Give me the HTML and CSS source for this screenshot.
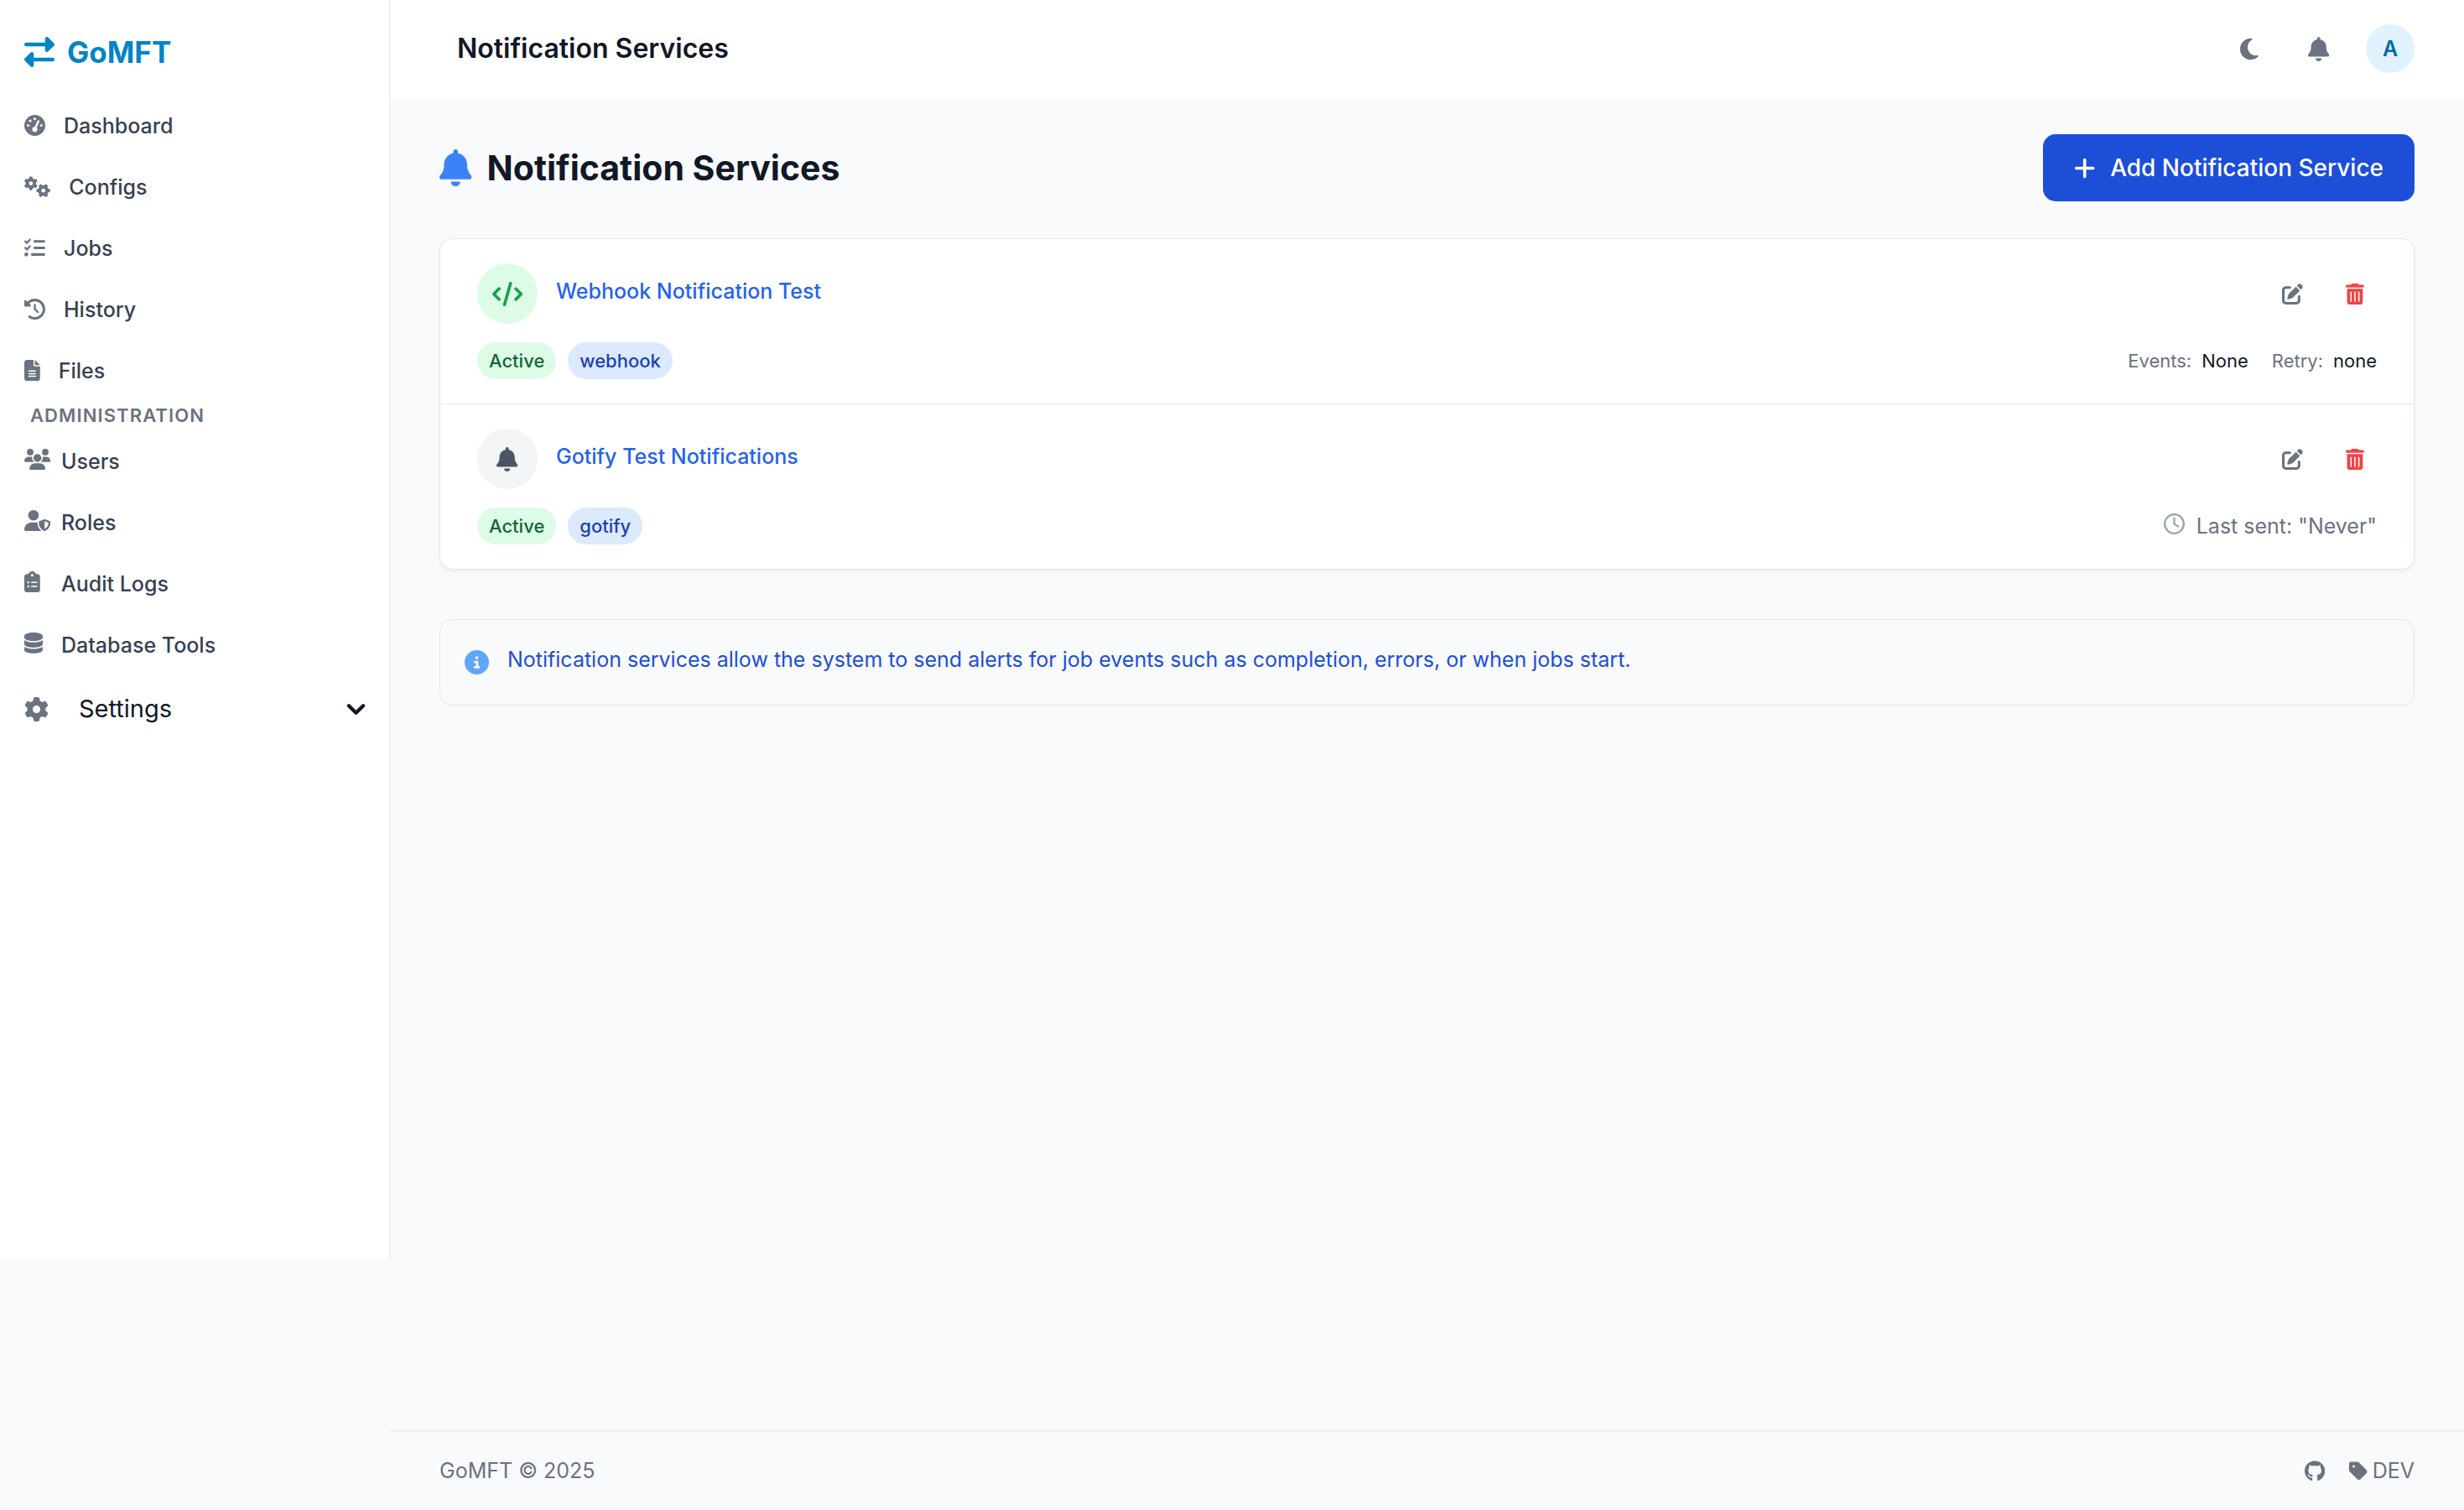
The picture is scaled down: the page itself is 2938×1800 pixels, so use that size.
FILE: index.html
```html
<!DOCTYPE html>
<html lang="en">
<head>
<meta charset="utf-8">
<meta name="viewport" content="width=device-width, initial-scale=1">
<title>Notification Services - GoMFT</title>
<link rel="stylesheet" href="styles.css">
</head>
<body>
<svg class="sprite" aria-hidden="true">
  <symbol id="bell" viewBox="0 0 448 512"><path d="M224 0c-17.7 0-32 14.3-32 32V51.2C119 66 64 130.6 64 208v18.8c0 47-17.3 92.4-48.5 127.6l-7.4 8.3c-8.4 9.4-10.4 22.9-5.3 34.4S19.4 416 32 416H416c12.6 0 24-7.4 29.2-18.9s3.1-25-5.3-34.4l-7.4-8.3C401.3 319.2 384 273.9 384 226.8V208c0-77.4-55-142-128-156.8V32c0-17.7-14.3-32-32-32zm45.3 493.3c12-12 18.7-28.3 18.7-45.3H224 160c0 17 6.7 33.3 18.7 45.3s28.3 18.7 45.3 18.7s33.3-6.7 45.3-18.7z"/></symbol>
  <symbol id="edit" viewBox="0 0 512 512"><path d="M471.6 21.7c-21.9-21.9-57.3-21.9-79.2 0L362.3 51.7l97.9 97.9 30.1-30.1c21.9-21.9 21.9-57.3 0-79.2L471.6 21.7zm-299.2 220c-6.1 6.1-10.8 13.6-13.5 21.9l-29.6 88.8c-2.9 8.6-.6 18.1 5.8 24.6s15.9 8.7 24.6 5.8l88.8-29.6c8.2-2.7 15.7-7.4 21.9-13.5L437.7 172.3 339.7 74.3 172.4 241.7zM96 64C43 64 0 107 0 160V416c0 53 43 96 96 96H352c53 0 96-43 96-96V320c0-17.7-14.3-32-32-32s-32 14.3-32 32v96c0 17.7-14.3 32-32 32H96c-17.7 0-32-14.3-32-32V160c0-17.7 14.3-32 32-32h96c17.7 0 32-14.3 32-32s-14.3-32-32-32H96z"/></symbol>
  <symbol id="trash" viewBox="0 0 448 512"><path d="M135.2 17.7L128 32H32C14.3 32 0 46.3 0 64S14.3 96 32 96H416c17.7 0 32-14.3 32-32s-14.3-32-32-32H320l-7.2-14.3C307.4 6.8 296.3 0 284.2 0H163.8c-12.1 0-23.2 6.8-28.6 17.7zM32 128V448c0 35.3 28.7 64 64 64H352c35.3 0 64-28.7 64-64V128H32zm96 64c8.8 0 16 7.2 16 16V432c0 8.8-7.2 16-16 16s-16-7.2-16-16V208c0-8.8 7.2-16 16-16zm96 0c8.8 0 16 7.2 16 16V432c0 8.8-7.2 16-16 16s-16-7.2-16-16V208c0-8.8 7.2-16 16-16zm96 0c8.8 0 16 7.2 16 16V432c0 8.8-7.2 16-16 16s-16-7.2-16-16V208c0-8.8 7.2-16 16-16z"/></symbol>
</svg>

<div class="layout">
  <aside class="sidebar">
    <a class="brand" href="#">
      <svg class="brand-icon" viewBox="0 0 512 512" aria-hidden="true"><path d="M32 96l320 0V32c0-12.9 7.8-24.6 19.8-29.6s25.7-2.2 34.9 6.9l96 96c6 6 9.4 14.1 9.4 22.6s-3.4 16.6-9.4 22.6l-96 96c-9.2 9.2-22.9 11.9-34.9 6.9s-19.8-16.6-19.8-29.6V160L32 160c-17.7 0-32-14.3-32-32s14.3-32 32-32zM480 352c17.7 0 32 14.3 32 32s-14.3 32-32 32H160v64c0 12.9-7.8 24.6-19.8 29.6s-25.7 2.2-34.9-6.9l-96-96c-6-6-9.4-14.1-9.4-22.6s3.4-16.6 9.4-22.6l96-96c9.2-9.2 22.9-11.9 34.9-6.9s19.8 16.6 19.8 29.6l0 64H480z"/></svg>
      GoMFT
    </a>
    <nav aria-label="Main">
      <ul class="nav">
        <li><a class="nav-link" href="#"><svg class="icon" viewBox="0 0 512 512" aria-hidden="true"><path d="M0 256a256 256 0 1 1 512 0A256 256 0 1 1 0 256zM288 96a32 32 0 1 0 -64 0 32 32 0 1 0 64 0zM256 416c35.3 0 64-28.7 64-64c0-17.4-6.9-33.1-18.1-44.6L366 161.7c5.3-12.1-.2-26.3-12.3-31.6s-26.3 .2-31.6 12.3L257.9 288c-.6 0-1.3 0-1.9 0c-35.3 0-64 28.7-64 64s28.7 64 64 64zM176 144a32 32 0 1 0 -64 0 32 32 0 1 0 64 0zM96 288a32 32 0 1 0 0-64 32 32 0 1 0 0 64zm352-32a32 32 0 1 0 -64 0 32 32 0 1 0 64 0z"/></svg>Dashboard</a></li>
        <li><a class="nav-link" href="#"><svg class="icon" viewBox="0 0 640 512" aria-hidden="true"><path d="M308.5 135.3c7.1-6.3 9.9-16.2 6.2-25c-2.3-5.3-4.8-10.5-7.6-15.5L304 89.4c-3-5-6.3-9.9-9.8-14.6c-5.7-7.6-15.7-10.1-24.7-7.1l-28.2 9.3c-10.7-8.8-23-16-36.2-20.9L199 27.1c-1.9-9.3-9.1-16.7-18.5-17.8C173.9 8.4 167.2 8 160.4 8h-.7c-6.8 0-13.5 .4-20.1 1.2c-9.4 1.1-16.6 8.6-18.5 17.8L115 56.1c-13.3 5-25.5 12.1-36.2 20.9L50.5 67.8c-9-3-19-.5-24.7 7.1c-3.5 4.7-6.8 9.6-9.9 14.6l-3 5.3c-2.8 5-5.3 10.2-7.6 15.6c-3.7 8.7-.9 18.6 6.2 25l22.2 19.8C32.6 161.9 32 168.9 32 176s.6 14.1 1.7 20.9L11.5 216.7c-7.1 6.3-9.9 16.2-6.2 25c2.3 5.3 4.8 10.5 7.6 15.6l3 5.2c3 5.1 6.3 9.9 9.9 14.6c5.7 7.6 15.7 10.1 24.7 7.1l28.2-9.3c10.7 8.8 23 16 36.2 20.9l6.1 29.1c1.9 9.3 9.1 16.7 18.5 17.8c6.7 .8 13.5 1.2 20.4 1.2s13.7-.4 20.4-1.2c9.4-1.1 16.6-8.6 18.5-17.8l6.1-29.1c13.3-5 25.5-12.1 36.2-20.9l28.2 9.3c9 3 19 .5 24.7-7.1c3.5-4.7 6.8-9.5 9.8-14.6l3.1-5.4c2.8-5 5.3-10.2 7.6-15.5c3.7-8.7 .9-18.6-6.2-25l-22.2-19.8c1.1-6.8 1.7-13.8 1.7-20.9s-.6-14.1-1.7-20.9l22.2-19.8zM112 176a48 48 0 1 1 96 0 48 48 0 1 1 -96 0zM504.7 500.5c6.3 7.1 16.2 9.9 25 6.2c5.3-2.3 10.5-4.8 15.5-7.6l5.4-3.1c5-3 9.9-6.3 14.6-9.8c7.6-5.7 10.1-15.7 7.1-24.7l-9.3-28.2c8.8-10.7 16-23 20.9-36.2l29.1-6.1c9.3-1.9 16.7-9.1 17.8-18.5c.8-6.7 1.2-13.5 1.2-20.4s-.4-13.7-1.2-20.4c-1.1-9.4-8.6-16.6-17.8-18.5L583.9 307c-5-13.3-12.1-25.5-20.9-36.2l9.3-28.2c3-9 .5-19-7.1-24.7c-4.7-3.5-9.6-6.8-14.6-9.9l-5.3-3c-5-2.8-10.2-5.3-15.6-7.6c-8.7-3.7-18.6-.9-25 6.2l-19.8 22.2c-6.8-1.1-13.8-1.7-20.9-1.7s-14.1 .6-20.9 1.7l-19.8-22.2c-6.3-7.1-16.2-9.9-25-6.2c-5.3 2.3-10.5 4.8-15.6 7.6l-5.2 3c-5.1 3-9.9 6.3-14.6 9.9c-7.6 5.7-10.1 15.7-7.1 24.7l9.3 28.2c-8.8 10.7-16 23-20.9 36.2L315.1 313c-9.3 1.9-16.7 9.1-17.8 18.5c-.8 6.7-1.2 13.5-1.2 20.4s.4 13.7 1.2 20.4c1.1 9.4 8.6 16.6 17.8 18.5l29.1 6.1c5 13.3 12.1 25.5 20.9 36.2l-9.3 28.2c-3 9-.5 19 7.1 24.7c4.7 3.5 9.5 6.8 14.6 9.8l5.4 3.1c5 2.8 10.2 5.3 15.5 7.6c8.7 3.7 18.6 .9 25-6.2l19.8-22.2c6.8 1.1 13.8 1.7 20.9 1.7s14.1-.6 20.9-1.7l19.8 22.2zM464 304a48 48 0 1 1 0 96 48 48 0 1 1 0-96z"/></svg>Configs</a></li>
        <li><a class="nav-link" href="#"><svg class="icon" viewBox="0 0 512 512" aria-hidden="true"><path d="M152.1 38.2c9.9 8.9 10.7 24 1.8 33.9l-72 80c-4.4 4.9-10.6 7.8-17.2 7.9s-12.9-2.4-17.6-7L7 113C-2.3 103.6-2.3 88.4 7 79s24.6-9.4 33.9 0l22.1 22.1 55.1-61.2c8.9-9.9 24-10.7 33.9-1.8zm0 160c9.9 8.9 10.7 24 1.8 33.9l-72 80c-4.4 4.9-10.6 7.8-17.2 7.9s-12.9-2.4-17.6-7L7 273c-9.4-9.4-9.4-24.6 0-33.9s24.6-9.4 33.9 0l22.1 22.1 55.1-61.2c8.9-9.9 24-10.7 33.9-1.8zM224 96c0-17.7 14.3-32 32-32H480c17.7 0 32 14.3 32 32s-14.3 32-32 32H256c-17.7 0-32-14.3-32-32zm0 160c0-17.7 14.3-32 32-32H480c17.7 0 32 14.3 32 32s-14.3 32-32 32H256c-17.7 0-32-14.3-32-32zM160 416c0-17.7 14.3-32 32-32H480c17.7 0 32 14.3 32 32s-14.3 32-32 32H192c-17.7 0-32-14.3-32-32zM48 368a48 48 0 1 1 0 96 48 48 0 1 1 0-96z"/></svg>Jobs</a></li>
        <li><a class="nav-link" href="#"><svg class="icon" viewBox="0 0 512 512" aria-hidden="true"><path d="M75 75L41 41C25.9 25.9 0 36.6 0 57.9V168c0 13.3 10.7 24 24 24H134.1c21.4 0 32.1-25.9 17-41l-30.8-30.8C155 85.5 203 64 256 64c106 0 192 86 192 192s-86 192-192 192c-40.8 0-78.6-12.7-109.7-34.4c-14.5-10.1-34.4-6.6-44.6 7.9s-6.6 34.4 7.9 44.6C151.2 495 201.7 512 256 512c141.4 0 256-114.6 256-256S397.4 0 256 0C185.3 0 121.3 28.7 75 75zm181 53c-13.3 0-24 10.7-24 24V256c0 6.4 2.5 12.5 7 17l72 72c9.4 9.4 24.6 9.4 33.9 0s9.4-24.6 0-33.9l-65-65V152c0-13.3-10.7-24-24-24z"/></svg>History</a></li>
        <li><a class="nav-link" href="#"><svg class="icon" viewBox="0 0 384 512" aria-hidden="true"><path d="M64 0C28.7 0 0 28.7 0 64V448c0 35.3 28.7 64 64 64H320c35.3 0 64-28.7 64-64V160H256c-17.7 0-32-14.3-32-32V0H64zM256 0V128H384L256 0zM112 256H272c8.8 0 16 7.2 16 16s-7.2 16-16 16H112c-8.8 0-16-7.2-16-16s7.2-16 16-16zm0 64H272c8.8 0 16 7.2 16 16s-7.2 16-16 16H112c-8.8 0-16-7.2-16-16s7.2-16 16-16zm0 64H272c8.8 0 16 7.2 16 16s-7.2 16-16 16H112c-8.8 0-16-7.2-16-16s7.2-16 16-16z"/></svg>Files</a></li>
      </ul>
      <h2 class="nav-heading">Administration</h2>
      <ul class="nav">
        <li><a class="nav-link admin" href="#"><span class="slot"><svg class="icon" viewBox="0 0 640 512" aria-hidden="true"><path d="M144 0a80 80 0 1 1 0 160A80 80 0 1 1 144 0zM512 0a80 80 0 1 1 0 160A80 80 0 1 1 512 0zM0 298.7C0 239.8 47.8 192 106.7 192h42.7c15.9 0 31 3.5 44.6 9.7c-1.3 7.2-1.9 14.7-1.9 22.3c0 38.2 16.8 72.5 43.3 96c-.2 0-.4 0-.7 0H21.3C9.6 320 0 310.4 0 298.7zM405.3 320c-.2 0-.4 0-.7 0c26.6-23.5 43.3-57.8 43.3-96c0-7.6-.7-15-1.9-22.3c13.6-6.3 28.7-9.7 44.6-9.7h42.7C592.2 192 640 239.8 640 298.7c0 11.8-9.6 21.3-21.3 21.3H405.3zM224 224a96 96 0 1 1 192 0 96 96 0 1 1 -192 0zM128 485.3C128 411.7 187.7 352 261.3 352H378.7C452.3 352 512 411.7 512 485.3c0 14.7-11.9 26.7-26.7 26.7H154.7c-14.7 0-26.7-11.9-26.7-26.7z"/></svg></span>Users</a></li>
        <li><a class="nav-link admin" href="#"><span class="slot"><svg class="icon" viewBox="0 0 640 512" aria-hidden="true"><path d="M224 256A128 128 0 1 0 224 0a128 128 0 1 0 0 256zm-45.7 48C79.8 304 0 383.8 0 482.3C0 498.7 13.3 512 29.7 512H418.3c1.8 0 3.5-.2 5.3-.5c-76.3-55.1-99.8-141-103.1-200.2c-16.1-4.8-33.1-7.3-50.7-7.3H178.3zm308.8-78.3l-120 48C358 277.4 352 286.2 352 296c0 63.3 25.9 168.8 134.8 214.2c5.9 2.5 12.6 2.5 18.5 0C614.1 464.8 640 359.3 640 296c0-9.8-6-18.6-15.1-22.3l-120-48c-5.7-2.3-12.1-2.3-17.8 0zM591.4 312c-3.9 50.7-27.2 116.7-95.4 149.7V273.8L591.4 312z"/></svg></span>Roles</a></li>
        <li><a class="nav-link admin" href="#"><span class="slot"><svg class="icon" viewBox="0 0 384 512" aria-hidden="true"><path d="M192 0c-41.8 0-77.4 26.7-90.5 64H64C28.7 64 0 92.7 0 128V448c0 35.3 28.7 64 64 64H320c35.3 0 64-28.7 64-64V128c0-35.3-28.7-64-64-64H282.5C269.4 26.7 233.8 0 192 0zm0 64a32 32 0 1 1 0 64 32 32 0 1 1 0-64zM72 272a24 24 0 1 1 48 0 24 24 0 1 1 -48 0zm104-16H304c8.8 0 16 7.2 16 16s-7.2 16-16 16H176c-8.8 0-16-7.2-16-16s7.2-16 16-16zM72 368a24 24 0 1 1 48 0 24 24 0 1 1 -48 0zm88 0c0-8.8 7.2-16 16-16H304c8.8 0 16 7.2 16 16s-7.2 16-16 16H176c-8.8 0-16-7.2-16-16z"/></svg></span>Audit Logs</a></li>
        <li><a class="nav-link admin" href="#"><span class="slot"><svg class="icon" viewBox="0 0 448 512" aria-hidden="true"><path d="M448 80v48c0 44.2-100.3 80-224 80S0 172.2 0 128V80C0 35.8 100.3 0 224 0S448 35.8 448 80zM393.2 214.7c20.8-7.4 39.9-16.9 54.8-28.6V288c0 44.2-100.3 80-224 80S0 332.2 0 288V186.1c14.9 11.8 34 21.2 54.8 28.6C99.7 230.7 159.5 240 224 240s124.3-9.3 169.2-25.3zM0 346.1c14.9 11.8 34 21.2 54.8 28.6C99.7 390.7 159.5 400 224 400s124.3-9.3 169.2-25.3c20.8-7.4 39.9-16.9 54.8-28.6V432c0 44.2-100.3 80-224 80S0 476.2 0 432V346.1z"/></svg></span>Database Tools</a></li>
      </ul>
      <button class="settings" type="button" aria-expanded="false">
        <svg class="icon-md" viewBox="0 0 512 512" aria-hidden="true"><path d="M495.9 166.6c3.2 8.7 .5 18.4-6.4 24.6l-43.3 39.4c1.1 8.3 1.7 16.8 1.7 25.4s-.6 17.1-1.7 25.4l43.3 39.4c6.9 6.2 9.6 15.9 6.4 24.6c-4.4 11.9-9.7 23.3-15.8 34.3l-4.7 8.1c-6.6 11-14 21.4-22.1 31.2c-5.9 7.2-15.7 9.6-24.5 6.8l-55.7-17.7c-13.4 10.3-28.2 18.9-44 25.4l-12.5 57.1c-2 9.1-9 16.3-18.2 17.8c-13.8 2.3-28 3.5-42.5 3.5s-28.7-1.2-42.5-3.5c-9.2-1.5-16.2-8.7-18.2-17.8l-12.5-57.1c-15.8-6.5-30.6-15.1-44-25.4L83.1 425.9c-8.8 2.8-18.6 .3-24.5-6.8c-8.1-9.8-15.5-20.2-22.1-31.2l-4.7-8.1c-6.1-11-11.4-22.4-15.8-34.3c-3.2-8.7-.5-18.4 6.4-24.6l43.3-39.4C64.6 273.1 64 264.6 64 256s.6-17.1 1.7-25.4L22.4 191.2c-6.9-6.2-9.6-15.9-6.4-24.6c4.4-11.9 9.7-23.3 15.8-34.3l4.7-8.1c6.6-11 14-21.4 22.1-31.2c5.9-7.2 15.7-9.6 24.5-6.8l55.7 17.7c13.4-10.3 28.2-18.9 44-25.4l12.5-57.1c2-9.1 9-16.3 18.2-17.8C227.3 1.2 241.5 0 256 0s28.7 1.2 42.5 3.5c9.2 1.5 16.2 8.7 18.2 17.8l12.5 57.1c15.8 6.5 30.6 15.1 44 25.4l55.7-17.7c8.8-2.8 18.6-.3 24.5 6.8c8.1 9.8 15.5 20.2 22.1 31.2l4.7 8.1c6.1 11 11.4 22.4 15.8 34.3zM256 336a80 80 0 1 0 0-160 80 80 0 1 0 0 160z"/></svg>
        <span class="settings-label">Settings</span>
        <svg class="chevron" viewBox="0 0 20 20" aria-hidden="true"><path d="M5.293 7.293a1 1 0 011.414 0L10 10.586l3.293-3.293a1 1 0 111.414 1.414l-4 4a1 1 0 01-1.414 0l-4-4a1 1 0 010-1.414z"/></svg>
      </button>
    </nav>
  </aside>

  <div class="page">
    <header class="topbar">
      <span class="topbar-title">Notification Services</span>
      <div class="topbar-actions">
        <button class="icon-button" type="button" aria-label="Toggle dark mode"><svg class="icon-md" viewBox="0 0 384 512" aria-hidden="true"><path d="M223.5 32C100 32 0 132.3 0 256S100 480 223.5 480c60.6 0 115.5-24.2 155.8-63.4c5-4.9 6.3-12.5 3.1-18.7s-10.1-9.7-17-8.5c-9.8 1.7-19.8 2.6-30.1 2.6c-96.9 0-175.5-78.8-175.5-176c0-65.8 36-123.1 89.3-153.3c6.1-3.5 9.2-10.5 7.7-17.3s-7.3-11.9-14.3-12.5c-6.3-.5-12.6-.8-19-.8z"/></svg></button>
        <button class="icon-button" type="button" aria-label="Notifications"><svg class="icon-md" viewBox="0 0 448 512" aria-hidden="true"><use href="#bell"/></svg></button>
        <button class="avatar" type="button" aria-label="Account">A</button>
      </div>
    </header>

    <main class="content">
      <div class="heading-row">
        <h1 class="heading"><svg class="heading-icon" viewBox="0 0 448 512" aria-hidden="true"><use href="#bell"/></svg>Notification Services</h1>
        <button class="primary" type="button"><svg class="icon-md" viewBox="0 0 448 512" aria-hidden="true"><path d="M256 80c0-17.7-14.3-32-32-32s-32 14.3-32 32V224H48c-17.7 0-32 14.3-32 32s14.3 32 32 32H192V432c0 17.7 14.3 32 32 32s32-14.3 32-32V288H400c17.7 0 32-14.3 32-32s-14.3-32-32-32H256V80z"/></svg>Add Notification Service</button>
      </div>

      <ul class="card">
        <li class="service">
          <div class="service-row">
            <span class="badge-icon green"><svg class="icon-md" viewBox="0 0 640 512" aria-hidden="true"><path d="M392.8 1.2c-17-4.9-34.7 5-39.6 22l-128 448c-4.9 17 5 34.7 22 39.6s34.7-5 39.6-22l128-448c4.9-17-5-34.7-22-39.6zm80.6 120.1c-12.5 12.5-12.5 32.8 0 45.3L562.7 256l-89.4 89.4c-12.5 12.5-12.5 32.8 0 45.3s32.8 12.5 45.3 0l112-112c12.5-12.5 12.5-32.8 0-45.3l-112-112c-12.5-12.5-32.8-12.5-45.3 0zm-306.7 0c-12.5-12.5-32.8-12.5-45.3 0l-112 112c-12.5 12.5-12.5 32.8 0 45.3l112 112c12.5 12.5 32.8 12.5 45.3 0s12.5-32.8 0-45.3L77.3 256l89.4-89.4c12.5-12.5 12.5-32.8 0-45.3z"/></svg></span>
            <a class="service-name" href="#">Webhook Notification Test</a>
            <button class="action" type="button" aria-label="Edit"><svg class="icon" viewBox="0 0 512 512" aria-hidden="true"><use href="#edit"/></svg></button>
            <button class="action danger" type="button" aria-label="Delete"><svg class="icon" viewBox="0 0 448 512" aria-hidden="true"><use href="#trash"/></svg></button>
          </div>
          <div class="service-row">
            <div class="pills"><span class="pill active">Active</span><span class="pill type">webhook</span></div>
            <dl class="facts">
              <div class="fact"><dt>Events:</dt><dd>None</dd></div>
              <div class="fact"><dt>Retry:</dt><dd>none</dd></div>
            </dl>
          </div>
        </li>
        <li class="service">
          <div class="service-row">
            <span class="badge-icon gray"><svg class="icon-md" viewBox="0 0 448 512" aria-hidden="true"><use href="#bell"/></svg></span>
            <a class="service-name" href="#">Gotify Test Notifications</a>
            <button class="action" type="button" aria-label="Edit"><svg class="icon" viewBox="0 0 512 512" aria-hidden="true"><use href="#edit"/></svg></button>
            <button class="action danger" type="button" aria-label="Delete"><svg class="icon" viewBox="0 0 448 512" aria-hidden="true"><use href="#trash"/></svg></button>
          </div>
          <div class="service-row">
            <div class="pills"><span class="pill active">Active</span><span class="pill type">gotify</span></div>
            <p class="last-sent"><span class="clock"><svg class="icon" viewBox="0 0 512 512" aria-hidden="true"><path d="M464 256A208 208 0 1 1 48 256a208 208 0 1 1 416 0zM0 256a256 256 0 1 0 512 0A256 256 0 1 0 0 256zM232 120V256c0 8 4 15.5 10.7 20l96 64c11 7.4 25.9 4.4 33.3-6.7s4.4-25.9-6.7-33.3L280 243.2V120c0-13.3-10.7-24-24-24s-24 10.7-24 24z"/></svg></span>Last sent: "Never"</p>
          </div>
        </li>
      </ul>

      <div class="info">
        <span class="info-icon"><svg class="icon-md" viewBox="0 0 512 512" aria-hidden="true"><path d="M256 512A256 256 0 1 0 256 0a256 256 0 1 0 0 512zM216 336h24V272H216c-13.3 0-24-10.7-24-24s10.7-24 24-24h48c13.3 0 24 10.7 24 24v88h8c13.3 0 24 10.7 24 24s-10.7 24-24 24H216c-13.3 0-24-10.7-24-24s10.7-24 24-24zm40-208a32 32 0 1 1 0 64 32 32 0 1 1 0-64z"/></svg></span>
        <p class="info-text">Notification services allow the system to send alerts for job events such as completion, errors, or when jobs start.</p>
      </div>
    </main>

    <footer class="footer">
      <span>GoMFT © 2025</span>
      <div class="footer-links">
        <a class="footer-link" href="#" aria-label="GitHub"><svg class="icon" viewBox="0 0 496 512" aria-hidden="true"><path d="M165.9 397.4c0 2-2.3 3.6-5.2 3.6-3.3.3-5.6-1.3-5.6-3.6 0-2 2.3-3.6 5.2-3.6 3-.3 5.6 1.3 5.6 3.6zm-31.1-4.5c-.7 2 1.3 4.3 4.3 4.9 2.6 1 5.6 0 6.2-2s-1.3-4.3-4.3-5.2c-2.6-.7-5.5.3-6.2 2.3zm44.2-1.7c-2.9.7-4.9 2.6-4.6 4.9.3 2 2.9 3.3 5.9 2.6 2.9-.7 4.9-2.6 4.6-4.6-.3-1.9-3-3.2-5.9-2.9zM244.8 8C106.1 8 0 113.3 0 252c0 110.9 69.8 205.8 169.5 239.2 12.8 2.3 17.3-5.6 17.3-12.1 0-6.2-.3-40.4-.3-61.4 0 0-70 15-84.7-29.8 0 0-11.4-29.1-27.8-36.6 0 0-22.9-15.7 1.6-15.4 0 0 24.9 2 38.6 25.8 21.9 38.6 58.6 27.5 72.9 20.9 2.3-16 8.8-27.1 16-33.7-55.9-6.2-112.3-14.3-112.3-110.5 0-27.5 7.6-41.3 23.6-58.9-2.6-6.5-11.1-33.3 2.6-67.9 20.9-6.5 69 27 69 27 20-5.6 41.5-8.5 62.8-8.5s42.8 2.9 62.8 8.5c0 0 48.1-33.6 69-27 13.7 34.7 5.2 61.4 2.6 67.9 16 17.7 25.8 31.5 25.8 58.9 0 96.5-58.9 104.2-114.8 110.5 9.2 7.9 17 22.9 17 46.4 0 33.7-.3 75.4-.3 83.6 0 6.5 4.6 14.4 17.3 12.1C428.2 457.8 496 362.9 496 252 496 113.3 383.5 8 244.8 8z"/></svg></a>
        <span class="version"><svg class="icon" viewBox="0 0 448 512" aria-hidden="true"><path d="M0 80V229.5c0 17 6.7 33.3 18.7 45.3l176 176c25 25 65.5 25 90.5 0L418.7 317.3c25-25 25-65.5 0-90.5l-176-176c-12-12-28.3-18.7-45.3-18.7H48C21.5 32 0 53.5 0 80zm112 32a32 32 0 1 1 0 64 32 32 0 1 1 0-64z"/></svg>DEV</span>
      </div>
    </footer>
  </div>
</div>
</body>
</html>
```
FILE: styles.css
```css
:root {
  --gray-50: #f9fafb;
  --gray-100: #f3f4f6;
  --gray-200: #e5e7eb;
  --gray-400: #9ca3af;
  --gray-500: #6b7280;
  --gray-600: #4b5563;
  --gray-700: #374151;
  --gray-900: #111827;
}

* { box-sizing: border-box; }

body {
  margin: 0;
  background: var(--gray-50);
  color: var(--gray-900);
  font: 400 25px/36px Inter, "Liberation Sans", sans-serif;
}

ul, dl, dd, p, h1, h2 { margin: 0; padding: 0; }
ul { list-style: none; }
a { color: inherit; text-decoration: none; }
button {
  margin: 0;
  padding: 0;
  border: 0;
  background: none;
  color: inherit;
  font: inherit;
  cursor: pointer;
}
svg { display: block; flex: none; fill: currentColor; }

.sprite { position: absolute; width: 0; height: 0; }
.icon { height: 25px; }
.icon-md { height: 29px; }

.layout { display: flex; min-height: 100vh; }

/* Sidebar */
.sidebar {
  flex: none;
  width: 465px;
  height: calc(100vh - 299px);
  background: #fff;
  border-right: 1px solid var(--gray-200);
}
.brand {
  display: flex;
  align-items: center;
  gap: 15px;
  padding: 40px 29px 29px;
  color: #0284c7;
  font-size: 35px;
  font-weight: 700;
  line-height: 44px;
}
.brand-icon { height: 36px; }
.nav-link {
  display: flex;
  align-items: center;
  gap: 22px;
  height: 73px;
  padding: 0 29px;
  color: var(--gray-700);
  font-weight: 500;
}
.nav-link svg { color: var(--gray-500); }
.admin { gap: 0; }
.slot { width: 44px; height: 30px; }
.nav-heading {
  padding: 0 36px;
  color: var(--gray-500);
  font-size: 22px;
  font-weight: 600;
  letter-spacing: 0.05em;
  line-height: 35px;
  text-transform: uppercase;
}
.settings {
  display: flex;
  align-items: center;
  width: 100%;
  height: 80px;
  padding: 0 18px 0 29px;
  font-size: 29px;
}
.settings .icon-md { color: var(--gray-500); }
.settings-label { flex: 1; padding-left: 36px; text-align: left; }
.chevron { width: 43px; height: 43px; }

/* Top bar */
.page { display: flex; flex: 1; flex-direction: column; min-width: 0; }
.topbar {
  display: flex;
  align-items: center;
  justify-content: space-between;
  height: 116px;
  padding: 0 59px 0 80px;
  background: #fff;
}
.topbar-title { font-size: 32px; font-weight: 600; }
.topbar-actions { display: flex; align-items: center; gap: 29px; }
.icon-button { padding: 15px; color: var(--gray-500); }
.avatar {
  width: 58px;
  height: 58px;
  border-radius: 50%;
  background: #e0f2fe;
  color: #0369a1;
  font-weight: 600;
}

/* Content */
.content { flex: 1; padding: 44px 59px 0; }
.heading-row {
  display: flex;
  align-items: center;
  justify-content: space-between;
  margin-bottom: 44px;
}
.heading {
  display: flex;
  align-items: center;
  gap: 18px;
  font-size: 41px;
  font-weight: 700;
  line-height: 52px;
}
.heading-icon { height: 44px; color: #3b82f6; }
.primary {
  display: flex;
  align-items: center;
  gap: 18px;
  height: 80px;
  padding: 0 37px;
  border-radius: 15px;
  background: #1d4ed8;
  color: #fff;
  font-size: 28px;
  font-weight: 500;
}

.card {
  border: 1px solid var(--gray-200);
  border-radius: 15px;
  background: #fff;
  box-shadow: 0 2px 4px rgba(0, 0, 0, 0.06);
}
.service {
  display: grid;
  gap: 22px;
  padding: 29px 44px;
}
.service + .service { border-top: 1px solid var(--gray-200); }
.service-row { display: flex; align-items: center; justify-content: space-between; }
.badge-icon {
  display: grid;
  place-items: center;
  width: 72px;
  height: 72px;
  border-radius: 50%;
}
.green { background: #dcfce7; color: #16a34a; }
.gray { background: var(--gray-100); color: var(--gray-600); }
.service-name {
  flex: 1;
  padding: 0 0 7px 22px;
  color: #2563eb;
  font-weight: 500;
}
.action { padding: 15px; color: var(--gray-500); }
.action + .action { margin-left: 21px; }
.danger { color: #ef4444; }
.pills { display: flex; gap: 14px; }
.pill {
  padding: 4px 14px;
  border-radius: 22px;
  font-size: 22px;
  font-weight: 500;
}
.active { background: #dcfce7; color: #166534; }
.type { background: #dbeafe; color: #1e40af; }
.facts { display: flex; gap: 28px; font-size: 22px; }
.fact { display: flex; gap: 12px; }
dt { color: var(--gray-500); }
.last-sent { display: flex; align-items: center; gap: 14px; color: var(--gray-500); }
.clock { height: 30px; color: var(--gray-400); }

.info {
  display: flex;
  gap: 22px;
  margin-top: 59px;
  padding: 29px;
  border: 1px solid var(--gray-200);
  border-radius: 15px;
}
.info-icon { display: flex; align-items: center; height: 43px; color: #60a5fa; }
.info-text { color: #1d4ed8; }

/* Footer */
.footer {
  display: flex;
  align-items: center;
  justify-content: space-between;
  height: 95px;
  padding: 0 59px;
  border-top: 1px solid var(--gray-200);
  color: var(--gray-500);
}
.footer-links { display: flex; align-items: center; gap: 29px; }
.version { display: flex; align-items: center; gap: 6px; }
```
